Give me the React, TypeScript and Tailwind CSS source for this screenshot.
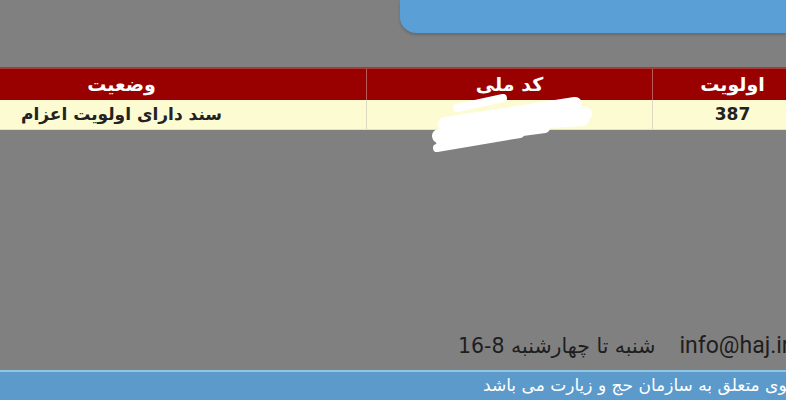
import React from "react";

const ar = { fontFamily: '"DejaVu Sans", sans-serif' };

export default function App() {
  return (
    <div className="relative w-[786px] h-[400px] overflow-hidden bg-[#808080] flex flex-col">
      {/* top blue panel */}
      <div className="flex justify-end h-[33px]">
        <div className="w-[386px] h-[33px] bg-[#5a9fd6] rounded-bl-[16px] shadow-[0_2px_3px_rgba(0,0,0,0.18)]" />
      </div>

      {/* table */}
      <div className="mt-[34px] ml-[-123px] w-[935px] flex flex-col" dir="ltr">
        <div className="flex h-[33px] bg-[#990000] border-t-2 border-[#a83a3a] text-white font-bold text-[19px]" style={ar}>
          <div className="w-[490px] flex items-center justify-center border-r border-[#b85a5a]" dir="rtl">وضعیت</div>
          <div className="w-[286px] flex items-center justify-center border-r border-[#b85a5a]" dir="rtl">کد ملی</div>
          <div className="w-[159px] flex items-center justify-center" dir="rtl">اولویت</div>
        </div>
        <div className="flex h-[30px] bg-[#fdfbd2] text-[#222] font-bold text-[17px] border-b border-[#e6e3c0]" style={ar}>
          <div className="w-[490px] flex items-center justify-center border-r border-[#dcd9c0]" dir="rtl">سند دارای اولویت اعزام</div>
          <div className="w-[286px] flex items-center justify-center border-r border-[#dcd9c0]"></div>
          <div className="w-[159px] flex items-center justify-center">387</div>
        </div>
      </div>

      {/* scribble overlay */}
      <svg className="absolute left-[425px] top-[90px]" width="175" height="65" viewBox="0 0 175 65">
        <g fill="none" stroke="#ffffff" strokeLinecap="round" strokeLinejoin="round">
          <path d="M32 18 L78 8" strokeWidth="8" />
          <path d="M20 34 L150 14" strokeWidth="14" />
          <path d="M14 46 L160 24" strokeWidth="14" />
          <path d="M30 38 L158 30" strokeWidth="12" />
          <path d="M16 52 L120 38" strokeWidth="10" />
          <path d="M12 58 L95 44" strokeWidth="8" />
        </g>
      </svg>

      <div className="flex-1" />

      {/* footer info line */}
      <div className="flex items-center pl-[458px] h-[30px] mb-[9px] whitespace-nowrap text-[#1e1e1e]">
        <span dir="rtl" style={ar} className="text-[20.5px]">شنبه تا چهارشنبه 8-16</span>
        <span className="ml-[24px] text-[23px]" style={{ fontFamily: 'Roboto, sans-serif' }}>info@haj.ir</span>
      </div>

      {/* bottom bar */}
      <div className="h-[30px] bg-[#5b9acb] border-t-2 border-[#8fc6e2] flex items-center pl-[483px] whitespace-nowrap text-white text-[17px]">
        <span dir="rtl" style={ar}>کلیه حقوق مادی و معنوی متعلق به سازمان حج و زیارت می باشد</span>
      </div>
    </div>
  );
}
